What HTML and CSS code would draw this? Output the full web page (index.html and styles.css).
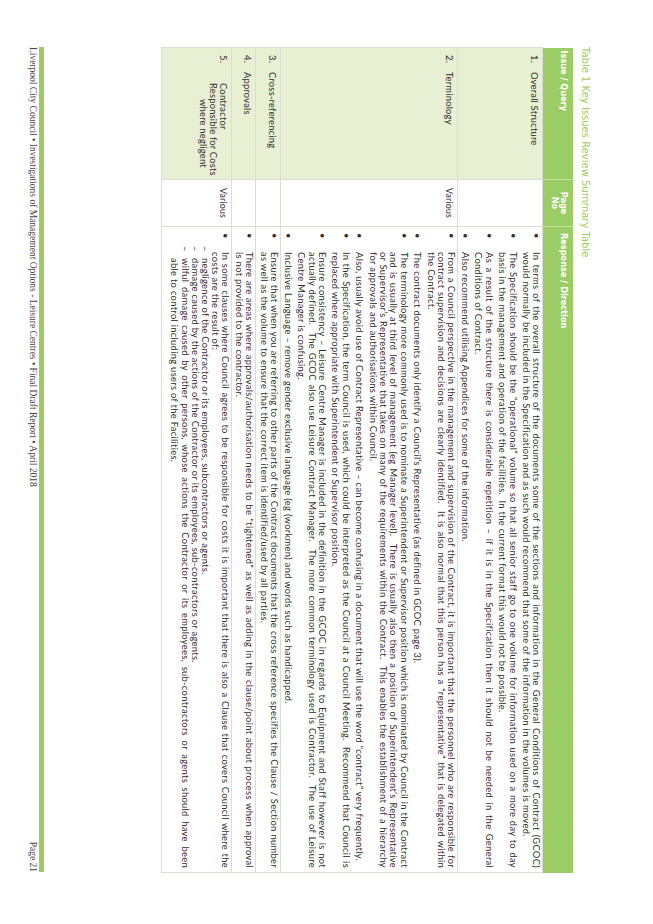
FILE: index.html
```html
<!DOCTYPE html>
<html lang="en">
<head>
<meta charset="utf-8">
<title>Key Issues Review Summary Table</title>
<link rel="stylesheet" href="styles.css">
</head>
<body>
<div class="viewport">
  <div class="page">
    <div class="title">Table 1 Key Issues Review Summary Table</div>
    <table class="review">
      <colgroup>
        <col class="c-issue">
        <col class="c-page">
        <col class="c-resp">
      </colgroup>
      <tr class="head">
        <th class="h-issue">Issue / Query</th>
        <th class="h-page">Page<br>No</th>
        <th class="h-resp">Response / Direction</th>
      </tr>
      <tr class="r1">
        <td class="issue"><div class="iss"><span>1.</span><span>Overall Structure</span></div></td>
        <td class="pg"></td>
        <td class="resp">
          <div class="item"><span class="mk">•</span><p><span class="ln">In terms of the overall structure of the documents some of the sections and information in the General Conditions of Contract (GCOC)</span><span class="ln">would normally be included in the Specification and as such would recommend that some of the information in the volumes is moved.</span></p></div>
          <div class="item"><span class="mk">•</span><p><span class="ln">The Specification should be the “operational” volume so that all senior staff go to one volume for information used on a more day to day</span><span class="ln">basis in the management and operation of the facilities.&nbsp; In the current format this would not be possible.</span></p></div>
          <div class="item"><span class="mk">•</span><p><span class="ln">As a result of the structure there is considerable repetition – if it is in the Specification then it should not be needed in the General</span><span class="ln">Conditions of Contract.</span></p></div>
          <div class="item"><span class="mk">•</span><p>Also recommend utilising Appendices for some of the information.</p></div>
        </td>
      </tr>
      <tr class="r2">
        <td class="issue"><div class="iss"><span>2.</span><span>Terminology</span></div></td>
        <td class="pg">Various</td>
        <td class="resp">
          <div class="item"><span class="mk">•</span><p><span class="ln">From a Council perspective in the management and supervision of the Contract, it is important that the personnel who are responsible for</span><span class="ln">contract supervision and decisions are clearly identified.&nbsp; It is also normal that this person has a “representative” that is delegated within</span><span class="ln">the Contract.</span></p></div>
          <div class="item"><span class="mk">•</span><p>The contract documents only identify a Council’s Representative (as defined in GCOC page 3).</p></div>
          <div class="item"><span class="mk">•</span><p><span class="ln">The terminology more commonly used is to nominate a Superintendent or Supervisor position which is nominated by Council in the Contract</span><span class="ln">and is usually at third level of management (eg Manager level).&nbsp; There is usually also then a position of Superintendent’s Representative</span><span class="ln">or Supervisor’s Representative that takes on many of the requirements within the Contract.&nbsp; This enables the establishment of a hierarchy</span><span class="ln">for approvals and authorisations within Council.</span></p></div>
          <div class="item"><span class="mk">•</span><p>Also, usually avoid use of Contract Representative – can become confusing in a document that will use the word “contract” very frequently.</p></div>
          <div class="item"><span class="mk">•</span><p><span class="ln">In the Specification, the term Council is used, which could be interpreted as the Council at a Council Meeting.&nbsp; Recommend that Council is</span><span class="ln">replaced where appropriate with Superintendent or Supervisor position.</span></p></div>
          <div class="item"><span class="mk">•</span><p><span class="ln">Ensure consistency – Leisure Centre Manager is included in the definition in the GCOC in regards to Equipment and Staff however is not</span><span class="ln">actually defined.&nbsp; The GCOC also use Leisure Contract Manager.&nbsp; The more common terminology used is Contractor.&nbsp; The use of Leisure</span><span class="ln">Centre Manager is confusing.</span></p></div>
          <div class="item"><span class="mk">•</span><p>Inclusive Language – remove gender exclusive language (eg (workmen) and words such as handicapped.</p></div>
        </td>
      </tr>
      <tr class="r3">
        <td class="issue"><div class="iss"><span>3.</span><span>Cross-referencing</span></div></td>
        <td class="pg"></td>
        <td class="resp">
          <div class="item"><span class="mk">•</span><p><span class="ln">Ensure that when you are referring to other parts of the Contract documents that the cross reference specifies the Clause / Section number</span><span class="ln">as well as the volume to ensure that the correct item is identified/used by all parties.</span></p></div>
        </td>
      </tr>
      <tr class="r4">
        <td class="issue"><div class="iss"><span>4.</span><span>Approvals</span></div></td>
        <td class="pg"></td>
        <td class="resp">
          <div class="item"><span class="mk">•</span><p><span class="ln">There are areas where approvals/authorisation needs to be “tightened” as well as adding in the clause/point about process when approval</span><span class="ln">is not provided to the contractor.</span></p></div>
        </td>
      </tr>
      <tr class="r5">
        <td class="issue"><div class="iss"><span>5.</span><span class="multi"><span class="ln">Contractor</span><span class="ln">Responsible for Costs</span><span class="ln ind">where negligent</span></span></div></td>
        <td class="pg">Various</td>
        <td class="resp">
          <div class="item"><span class="mk">•</span><div>
            <p><span class="ln">In some clauses where Council agrees to be responsible for costs it is important that there is also a Clause that covers Council where the</span><span class="ln">costs are the result of:</span></p>
            <div class="dash"><span class="dk">–</span><p>negligence of the Contractor or its employees, subcontractors or agents.</p></div>
            <div class="dash"><span class="dk">–</span><p>damage caused by the actions of the Contractor or its employees, sub-contractors or agents.</p></div>
            <div class="dash"><span class="dk">–</span><p><span class="ln">wilful damage caused by other persons, whose actions the Contractor or its employees, sub-contractors or agents should have been</span><span class="ln">able to control including users of the Facilities.</span></p></div>
          </div></div>
        </td>
      </tr>
    </table>
    <div class="footer">
      <span class="footer-text">Liverpool City Council • Investigations of Management Options - Leisure Centres • Final Draft Report • April 2018</span>
      <span class="page-num">Page 21</span>
    </div>
  </div>
</div>
</body>
</html>
```
FILE: styles.css
```css
html, body {
  margin: 0;
  padding: 0;
  background: #ffffff;
}

.viewport {
  width: 653px;
  height: 924px;
  overflow: hidden;
}

.page {
  box-sizing: border-box;
  width: 924px;
  height: 653px;
  padding: 0 52px 0 47px;
  display: flex;
  flex-direction: column;
  transform-origin: 0 0;
  transform: translateX(653px) rotate(90deg);
  font-family: Lato, "Liberation Sans", sans-serif;
  color: #2e2e2e;
}

.title {
  margin: 62px 0 6px;
  font-family: "DejaVu Sans", sans-serif;
  font-size: 10px;
  line-height: 12px;
  color: #9ccb63;
}

.review {
  width: 825px;
  border-collapse: collapse;
  table-layout: fixed;
}

.c-issue { width: 132px; }
.c-page { width: 47px; }
.c-resp { width: 646px; }

.head { height: 30px; }
.r1 { height: 85px; }
.r2 { height: 176px; }
.r3 { height: 25px; }
.r4 { height: 24px; }
.r5 { height: 70px; }

.review th {
  background: #9ccc65;
  color: #ffffff;
  font-family: "DejaVu Sans", sans-serif;
  font-weight: bold;
  font-size: 8.2px;
  line-height: 8.5px;
  text-align: left;
  vertical-align: top;
  padding: 5px 3px 0;
  border-right: 1px solid #c4e2a2;
}

.review th.h-page {
  text-align: center;
}

.review th.h-resp {
  padding-left: 6px;
  border-right: none;
}

.review td {
  border: 1px solid #dcdcd4;
  vertical-align: top;
  padding: 1px 4px 1px 0;
  font-size: 9.4px;
  letter-spacing: 0.3px;
  line-height: 10.2px;
}

.review td.issue {
  background: #e8f0d3;
  padding-left: 7px;
  padding-right: 1px;
  letter-spacing: 0.2px;
}

.iss {
  display: grid;
  grid-template-columns: 17px 1fr;
  padding-top: 2px;
}

.multi {
  display: flex;
  flex-direction: column;
  padding-left: 11px;
  white-space: nowrap;
}

.ind {
  padding-left: 16px;
}

.review td.pg {
  text-align: center;
  padding: 3px 0 0;
  font-size: 8.8px;
  letter-spacing: 0.2px;
}

.review td.resp {
  padding-left: 6px;
}

.item {
  display: grid;
  grid-template-columns: 19px 1fr;
  margin-bottom: 3.5px;
}

.item:last-child {
  margin-bottom: 0;
}

.item p,
.dash p {
  margin: 0;
  text-align: left;
}

.resp .ln {
  display: block;
  text-align: justify;
  text-align-last: justify;
}

.resp .ln:last-child {
  text-align: left;
  text-align-last: left;
}

.dash {
  display: grid;
  grid-template-columns: 12px 1fr;
  margin-left: -6px;
}

.footer {
  margin-top: auto;
  margin-bottom: 27px;
  width: 825px;
  border-top: 5px solid #9ccb5f;
  padding-top: 1px;
  display: flex;
  justify-content: space-between;
  font-family: "Liberation Serif", serif;
  font-size: 9.5px;
  line-height: 11px;
  color: #444444;
}
```
